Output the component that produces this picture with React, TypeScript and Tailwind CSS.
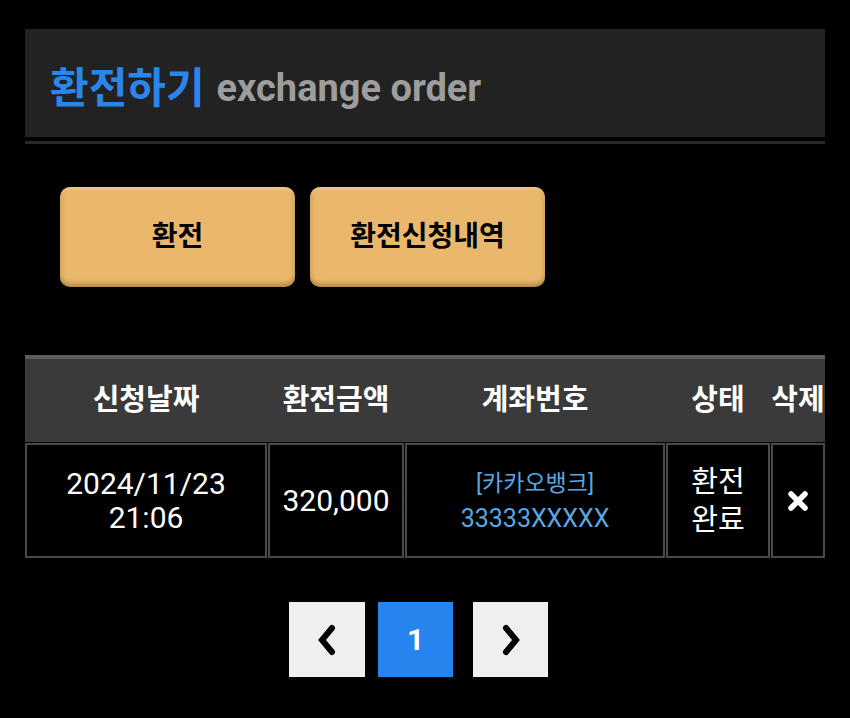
const font = "font-['Roboto','Noto_Sans_CJK_KR',sans-serif]";

const ChevronLeft = () => (
  <svg width="24" height="32" viewBox="0 0 24 32" fill="none">
    <path d="M17 4 L7 16 L17 28" stroke="#000" strokeWidth="6" strokeLinecap="round" strokeLinejoin="miter" />
  </svg>
);

const ChevronRight = () => (
  <svg width="24" height="32" viewBox="0 0 24 32" fill="none">
    <path d="M7 4 L17 16 L7 28" stroke="#000" strokeWidth="6" strokeLinecap="round" strokeLinejoin="miter" />
  </svg>
);

const Cross = () => (
  <svg width="22" height="22" viewBox="0 0 22 22" fill="none">
    <path d="M4 4 L18 18 M18 4 L4 18" stroke="#fff" strokeWidth="5.5" strokeLinecap="round" />
  </svg>
);

const cols = "grid grid-cols-[242px_136px_260px_104px_54px] gap-x-[1px]";

export default function App() {
  return (
    <div className={`${font} min-h-[718px] w-full bg-black`}>
      <div className="mx-[25px] pt-[29px]">
        {/* title bar */}
        <div className="flex h-[108px] items-center bg-[#222222] pl-[25px] pt-[10px]">
          <span className="text-[42px] font-bold text-[#2b86ea]">환전하기</span>
          <span className="ml-[12px] text-[38px] font-bold text-[#9d9d9d]">exchange order</span>
        </div>
        <div className="mt-[4px] h-[3px] bg-[#292929]" />

        {/* buttons */}
        <div className="mt-[43px] flex gap-[15px] pl-[35px]">
          {["환전", "환전신청내역"].map((label) => (
            <button
              key={label}
              className="flex h-[100px] w-[235px] items-center justify-center rounded-[10px] bg-[#e9b86d] text-[28px] font-bold text-black shadow-[inset_0_-3px_5px_rgba(120,80,20,0.5),inset_0_2px_3px_rgba(255,230,180,0.5)]"
            >
              {label}
            </button>
          ))}
        </div>

        {/* table */}
        <div className="mt-[68px]">
          <div className={`${cols} h-[87px] items-center border-t-[4px] border-[#5c5c5c] bg-[#3a3a3a] text-center text-[29px] font-bold text-white`}>
            <div>신청날짜</div>
            <div>환전금액</div>
            <div>계좌번호</div>
            <div>상태</div>
            <div>삭제</div>
          </div>
          <div className={`${cols} mt-[1px] h-[115px] text-center text-white`}>
            <div className="flex flex-col items-center justify-center border-2 border-[#4a4a4a] text-[30px] leading-[34px]">
              <span>2024/11/23</span>
              <span>21:06</span>
            </div>
            <div className="flex items-center justify-center border-2 border-[#4a4a4a] text-[30px]">320,000</div>
            <div className="flex flex-col items-center justify-center border-2 border-[#4a4a4a] leading-[35px] text-[#5aa6e0]">
              <span className="text-[23px]">[카카오뱅크]</span>
              <span className="text-[25px]">33333XXXXX</span>
            </div>
            <div className="flex flex-col items-center justify-center border-2 border-[#4a4a4a] text-[29px] leading-[38px]">
              <span>환전</span>
              <span>완료</span>
            </div>
            <div className="flex items-center justify-center border-2 border-[#4a4a4a]">
              <Cross />
            </div>
          </div>
        </div>

        {/* pagination */}
        <div className="mt-[44px] flex pl-[264px]">
          <button className="flex h-[75px] w-[76px] items-center justify-center bg-[#efefef]">
            <ChevronLeft />
          </button>
          <button className="ml-[13px] flex h-[75px] w-[75px] items-center justify-center bg-[#2684ee] text-[30px] font-bold text-white">
            1
          </button>
          <button className="ml-[20px] flex h-[75px] w-[75px] items-center justify-center bg-[#efefef]">
            <ChevronRight />
          </button>
        </div>
      </div>
    </div>
  );
}
